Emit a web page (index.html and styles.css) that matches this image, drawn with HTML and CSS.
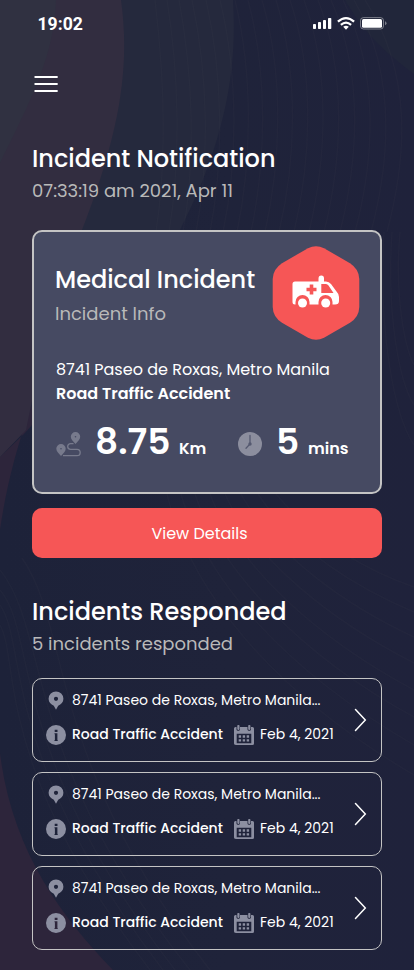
FILE: index.html
```html
<!DOCTYPE html>
<html lang="en">
<head>
<meta charset="utf-8">
<meta name="viewport" content="width=device-width, initial-scale=1">
<title>Incident Notification</title>
<link rel="stylesheet" href="styles.css">
</head>
<body>
<svg width="0" height="0" class="defs" aria-hidden="true">
  <symbol id="pin" viewBox="0 .6 20 20"><path fill-rule="evenodd" d="M10 1a7.400 7.400 0 0 1 7.400 7.400c0 3.500-2.300 5.800-5.200 6.900L10 19.300l-2.200-4c-2.900-1.100-5.200-3.400-5.200-6.900A7.400 7.400 0 0 1 10 1zm0 5.300a2.100 2.100 0 1 0 0 4.200 2.100 2.100 0 0 0 0-4.200z"/></symbol>
  <symbol id="info" viewBox="0 0 20 20"><path fill-rule="evenodd" d="M10 0a10 10 0 1 1 0 20 10 10 0 0 1 0-20zM8.700 4.700v2.200h2.800v-2.200zM8.500 8.200v1h.4v5.900h-.4v1h3.200v-1h-.3V8.200z"/></symbol>
  <symbol id="calendar" viewBox="0 0 20 20"><path fill-rule="evenodd" d="M1.500 2h1v2.600q0 1.100 1.100 1.100h1.300q1.100 0 1.100-1.100V2h7.500v2.600q0 1.100 1.100 1.100h1.300q1.100 0 1.100-1.100V2h1.500q1.500 0 1.500 1.500v15q0 1.500-1.500 1.500h-16Q0 20 0 18.500v-15Q0 2 1.500 2zM2.700 8.700v9.600h14.600V8.700z"/><rect x="3.300" y="0" width="2.200" height="4.900" rx=".8"/><rect x="14.200" y="0" width="2.200" height="4.900" rx=".8"/><path d="M4.700 10.300h2.400v2.400H4.700zM8.700 10.300h2.400v2.400H8.700zM12.700 10.300h2.400v2.400h-2.400zM4.700 14.200h2.400v2.400H4.700zM8.700 14.200h2.400v2.400H8.700zM12.700 14.200h2.400v2.400h-2.400z"/></symbol>
  <symbol id="chevron" viewBox="0 0 13 24"><path d="M1.500 1.500 11.300 12 1.500 22.500" fill="none" stroke="#fff" stroke-width="1.500" stroke-linecap="round"/></symbol>
</svg>

<svg class="backdrop" viewBox="0 0 414 970" aria-hidden="true">
  <defs>
    <linearGradient id="base" x1="0" y1="0" x2="1" y2="0"><stop offset="0" stop-color="#1d2239"/><stop offset=".55" stop-color="#1f233a"/><stop offset="1" stop-color="#1f223b"/></linearGradient>
  </defs>
  <rect width="414" height="970" fill="url(#base)"/>
  <path d="M0 0H233C236 50 234 125 180 230C140 310 60 395 0 457Z" fill="#25293d"/>
  <path d="M0 457C12 445 22 437 32 425V405C15 450 5 495 0 530Z" fill="#2d253b"/>
  <path d="M0 0H121C130 65 121 130 82 230C58 295 40 360 26 430L0 457Z" fill="#322d40"/>
  <path d="M0 0H56C54 55 34 94 0 163Z" fill="#303141"/>
  <path d="M345 0C365 35 385 52 414 74V0Z" fill="#21263a"/>
  <path d="M0 753C12 850 60 915 113 970H0Z" fill="#2d253b"/>
  <g class="contours">
    <path d="M155 0C164 75 167 160 156 232"/><path d="M167 0C179 75 181 160 169 232"/><path d="M179 0C193 75 196 160 183 232"/><path d="M192 0C208 75 210 160 196 232"/><path d="M206 0C223 75 224 160 210 232"/><path d="M220 0C238 75 238 160 223 232"/><path d="M235 0C253 75 252 160 237 232"/><path d="M248 0C268 75 266 160 251 232"/><path d="M262 0C284 75 281 160 265 232"/><path d="M276 0C299 75 296 160 279 232"/><path d="M290 0C315 75 311 160 294 232"/><path d="M304 0C331 75 326 160 309 232"/><path d="M318 0C347 75 342 160 324 232"/><path d="M331 0C364 75 358 160 340 232"/><path d="M343 0C380 75 374 160 355 232"/><path d="M354 0C397 75 390 160 371 232"/><path d="M365 0C414 75 406 160 387 232"/>
    <path d="M384 232C378 330 394 415 414 445"/><path d="M392 232C386 320 401 385 414 405"/><path d="M400 232C394 300 406 350 414 365"/>
    <path d="M167 494C190 590 270 690 414 775"/><path d="M181 494C205 580 285 670 414 745"/><path d="M195 494C220 570 300 655 414 717"/><path d="M210 494C237 565 315 637 414 690"/><path d="M225 494C255 560 330 620 414 663"/><path d="M241 494C275 555 345 605 414 637"/><path d="M258 494C295 550 355 587 414 612"/><path d="M276 494C315 540 365 570 414 587"/>
    <path d="M0 590C38 635 5 750 175 970"/><path d="M0 605C28 645 -2 755 163 970"/><path d="M0 625C20 660 -8 765 150 970"/><path d="M22 558C72 630 45 760 210 970"/><path d="M0 570C50 632 20 757 190 970"/>
  </g>
</svg>

<main class="screen">
  <header class="status">
    <span class="time">19:02</span>
    <svg class="signals" width="74" height="14" viewBox="0 0 74 14" aria-hidden="true">
      <g fill="#fff"><rect y="7" width="3" height="5" rx=".8"/><rect x="5" y="5" width="3" height="7" rx=".8"/><rect x="10" y="3" width="3" height="9" rx=".8"/><rect x="15" y="1" width="3.300" height="11" rx=".8"/></g>
      <g fill="none" stroke="#fff" stroke-width="2.200"><path d="M24.900 4.700Q33-2.400 41.100 4.700"/><path d="M27.900 7.800Q33 3.400 38.100 7.800"/></g><path d="M30.200 9.800Q33 7.500 35.800 9.800L33 12.700Z" fill="#fff"/>
      <rect x="47.500" y=".6" width="23" height="11.400" rx="3" fill="none" stroke="#fff" stroke-opacity=".4"/><rect x="49" y="2" width="20" height="8.700" rx="1.500" fill="#fff"/><path d="M72 4.300q1.500.5 1.500 2t-1.500 2z" fill="#fff" opacity=".4"/>
    </svg>
  </header>
  <nav><svg class="menu" width="24" height="18" viewBox="0 0 24 18" aria-label="Menu"><path d="M1.200 2H23M1.200 9H23M1.200 16H23" stroke="#fff" stroke-width="1.800" stroke-linecap="round"/></svg></nav>

  <section>
    <h1 class="title">Incident Notification</h1>
    <p class="subtitle">07:33:19 am 2021, Apr 11</p>
  </section>

  <article class="card">
    <div class="card-head">
      <div>
        <h2 class="title">Medical Incident</h2>
        <p class="subtitle">Incident Info</p>
      </div>
      <svg class="badge" width="88" height="96" viewBox="0 0 88 96" aria-hidden="true">
        <path d="M36 3.200Q44-.8 52 3.200L78 18.200Q87 24 87.300 34V62Q87 72 78 77.800L52 92.800Q44 96.800 36 92.800L10 77.800Q1 72 .7 62V34Q1 24 10 18.200Z" fill="#f65656"/>
        <path d="M23 36.500H46.500V33.500Q46.500 30.500 49.300 30.500T52 33.500V36.500H54Q57 36.500 59 39L64.500 46.500Q67 49 67 52V56Q67 59.500 63 59.500H23Q20.500 59.500 20.500 57V39Q20.500 36.500 23 36.500Z" fill="#fff"/>
        <path d="M37.700 39.500h3.600v3.200h3.200v3.500h-3.200v3.200h-3.600v-3.200h-3.200v-3.500h3.200zM49.300 39H54Q55.500 39 56.500 40.500L61.500 48H49.300ZM23.500 60V57a7 7 0 0 1 14 0v3ZM46.500 60V57a7 7 0 0 1 14 0v3Z" fill="#f65656"/>
        <circle cx="30.500" cy="58" r="4.500" fill="#fff"/><circle cx="53.700" cy="58" r="4.500" fill="#fff"/>
      </svg>
    </div>
    <div class="where">
      <p>8741 Paseo de Roxas, Metro Manila</p>
      <p class="strong">Road Traffic Accident</p>
    </div>
    <div class="stats">
      <svg class="stat-icon" width="25" height="25" viewBox="0 0 25 25" aria-hidden="true"><g fill="#777a8c"><path fill-rule="evenodd" d="M19.500 0a4.700 4.700 0 0 1 4.700 4.700c0 2.700-2.700 4.800-4.700 7.300-2-2.500-4.700-4.600-4.700-7.300A4.700 4.700 0 0 1 19.500 0zm0 4a.8.8 0 1 0 0 1.600.8.8 0 0 0 0-1.600z"/><path fill-rule="evenodd" d="M5 12a4.700 4.700 0 0 1 4.700 4.700C9.700 19.400 7 21.500 5 24 3 21.500.3 19.400.3 16.700A4.700 4.700 0 0 1 5 12zm0 4a.8.8 0 1 0 0 1.600A.8.8 0 0 0 5 16z"/></g><path d="M17.500 11.700H14.500a2.800 2.800 0 0 0 0 5.600H21a3.200 3.200 0 0 1 0 6.400H7" fill="none" stroke="#777a8c" stroke-width="1.300"/></svg>
      <span class="number n-km">8.75</span><span class="unit u-km">Km</span>
      <svg class="stat-icon" width="24" height="24" viewBox="0 0 24 24" aria-hidden="true"><circle cx="12" cy="12" r="12" fill="#8c8e9e"/><path d="M12 3.500V12L8 16.300" fill="none" stroke="#555970" stroke-width="1.300" stroke-linecap="round"/><circle cx="12" cy="12" r="1.700" fill="#555970"/></svg>
      <span class="number n-min">5</span><span class="unit">mins</span>
    </div>
  </article>

  <button class="cta" type="button">View Details</button>

  <section class="responded">
    <h2 class="title">Incidents Responded</h2>
    <p class="subtitle">5 incidents responded</p>
  </section>

  <ul class="list">
    <li class="item">
      <div class="rows">
        <div class="row"><svg class="icon"><use href="#pin"/></svg><span>8741 Paseo de Roxas, Metro Manila...</span></div>
        <div class="row"><svg class="icon"><use href="#info"/></svg><span class="kind">Road Traffic Accident</span><svg class="icon"><use href="#calendar"/></svg><span>Feb 4, 2021</span></div>
      </div>
      <svg class="chevron"><use href="#chevron"/></svg>
    </li>
    <li class="item">
      <div class="rows">
        <div class="row"><svg class="icon"><use href="#pin"/></svg><span>8741 Paseo de Roxas, Metro Manila...</span></div>
        <div class="row"><svg class="icon"><use href="#info"/></svg><span class="kind">Road Traffic Accident</span><svg class="icon"><use href="#calendar"/></svg><span>Feb 4, 2021</span></div>
      </div>
      <svg class="chevron"><use href="#chevron"/></svg>
    </li>
    <li class="item">
      <div class="rows">
        <div class="row"><svg class="icon"><use href="#pin"/></svg><span>8741 Paseo de Roxas, Metro Manila...</span></div>
        <div class="row"><svg class="icon"><use href="#info"/></svg><span class="kind">Road Traffic Accident</span><svg class="icon"><use href="#calendar"/></svg><span>Feb 4, 2021</span></div>
      </div>
      <svg class="chevron"><use href="#chevron"/></svg>
    </li>
  </ul>
</main>
</body>
</html>
```
FILE: styles.css
```css
* { box-sizing: border-box; margin: 0; padding: 0; }
body {
  width: 414px;
  height: 970px;
  overflow: hidden;
  position: relative;
  background: #1f233a;
  color: #fff;
  font-family: Poppins, Inter, sans-serif;
}
.defs { position: absolute; }
.backdrop { position: absolute; inset: 0; width: 414px; height: 970px; z-index: -1; }
.contours { fill: none; stroke: #4a5058; stroke-opacity: .09; stroke-width: 1.4; }

.screen { display: flex; flex-direction: column; padding: 0 32px; white-space: nowrap; }
.status { display: flex; align-items: center; justify-content: space-between; height: 47px; margin: 0 -5px 0 5.5px; }
.time { font: 700 17.6px/24px Roboto, sans-serif; }
.signals { display: block; }
nav { height: 94px; padding: 28px 0 0 2px; }
.menu { display: block; }

.title { font-weight: 500; font-size: 24px; line-height: 36px; }
.subtitle { font-weight: 400; font-size: 18px; line-height: 27px; color: #b9b9b9; }

.card {
  height: 264px;
  margin-top: 26px;
  padding: 14px 21px 0;
  border: 2px solid #c4c4c4;
  border-radius: 10px;
  background: #464a62;
}
.card-head { display: flex; justify-content: space-between; height: 112px; }
.card-head > div { padding-top: 16px; }
.card-head .subtitle { margin-top: 2px; }
.badge { display: block; margin: -1px -1px 0 0; flex: none; }
.where { padding-left: 1px; font-size: 16px; line-height: 24px; }
.strong { font-weight: 600; }
.stats { display: flex; align-items: baseline; height: 54px; margin-top: 9px; padding-left: 1px; line-height: 54px; }
.stat-icon { flex: none; align-self: flex-start; margin-top: 17px; }
.number { font-size: 36px; font-weight: 600; }
.unit { font-size: 16px; font-weight: 600; }
.n-km { width: 84px; margin-left: 14px; }
.u-km { width: 59px; }
.n-min { width: 32px; margin-left: 14px; }

.cta {
  height: 50px;
  margin-top: 14px;
  padding: 1px 15px 0 0;
  border: 0;
  border-radius: 10px;
  background: #f65656;
  color: #fff;
  font: 400 16px/24px Poppins, Inter, sans-serif;
}
.responded { margin-top: 36px; }

.list { display: flex; flex-direction: column; gap: 10px; margin-top: 21px; list-style: none; }
.item {
  display: flex;
  align-items: center;
  justify-content: space-between;
  height: 84px;
  padding: 0 14px 0 13px;
  border: 1px solid #c4c4c4;
  border-radius: 10px;
}
.rows { display: flex; flex-direction: column; gap: 13px; padding-bottom: 5px; font-size: 14px; line-height: 21px; }
.row { display: flex; align-items: center; height: 21px; }
.icon { width: 20px; height: 20px; margin-right: 6px; fill: #8c8fa1; flex: none; }
.kind { width: 162px; font-weight: 500; }
.chevron { width: 13px; height: 24px; flex: none; }
```
